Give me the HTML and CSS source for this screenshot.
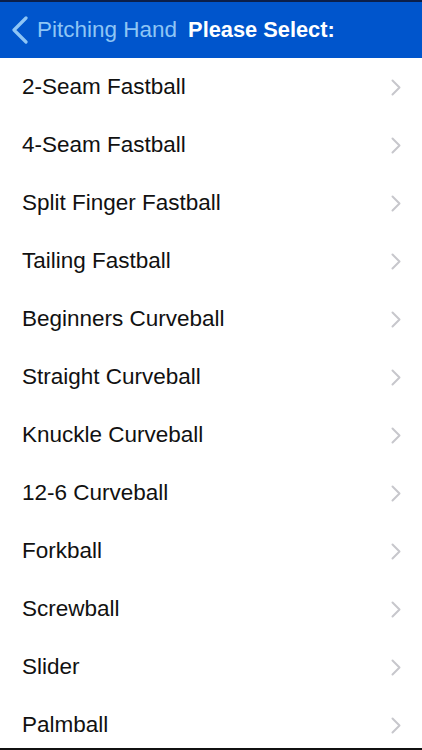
FILE: index.html
```html
<!DOCTYPE html>
<html lang="en">
  <head>
    <meta charset="UTF-8" />
    <meta name="viewport" content="width=device-width, initial-scale=1.0" />
    <title>Please Select</title>
    <link rel="stylesheet" href="styles.css">
  </head>
  <body>
    <header class="navbar">
      <a class="back" href="#">
        <svg class="back-icon" width="18" height="28" viewBox="0 0 18 28">
          <path d="M15 2 L3 14 L15 26" fill="none" stroke="#8ec5f5" stroke-width="3.2" stroke-linecap="round" stroke-linejoin="round" />
        </svg>
        <span>Pitching Hand</span>
      </a>
      <h1 class="title">Please Select:</h1>
    </header>

    <ul class="pitch-list">
      <li>2-Seam Fastball <svg class="chevron" viewBox="0 0 10 17"><path d="M1.5 1.5 L8.5 8.5 L1.5 15.5" /></svg></li>
      <li>4-Seam Fastball <svg class="chevron" viewBox="0 0 10 17"><path d="M1.5 1.5 L8.5 8.5 L1.5 15.5" /></svg></li>
      <li>Split Finger Fastball <svg class="chevron" viewBox="0 0 10 17"><path d="M1.5 1.5 L8.5 8.5 L1.5 15.5" /></svg></li>
      <li>Tailing Fastball <svg class="chevron" viewBox="0 0 10 17"><path d="M1.5 1.5 L8.5 8.5 L1.5 15.5" /></svg></li>
      <li>Beginners Curveball <svg class="chevron" viewBox="0 0 10 17"><path d="M1.5 1.5 L8.5 8.5 L1.5 15.5" /></svg></li>
      <li>Straight Curveball <svg class="chevron" viewBox="0 0 10 17"><path d="M1.5 1.5 L8.5 8.5 L1.5 15.5" /></svg></li>
      <li>Knuckle Curveball <svg class="chevron" viewBox="0 0 10 17"><path d="M1.5 1.5 L8.5 8.5 L1.5 15.5" /></svg></li>
      <li>12-6 Curveball <svg class="chevron" viewBox="0 0 10 17"><path d="M1.5 1.5 L8.5 8.5 L1.5 15.5" /></svg></li>
      <li>Forkball <svg class="chevron" viewBox="0 0 10 17"><path d="M1.5 1.5 L8.5 8.5 L1.5 15.5" /></svg></li>
      <li>Screwball <svg class="chevron" viewBox="0 0 10 17"><path d="M1.5 1.5 L8.5 8.5 L1.5 15.5" /></svg></li>
      <li>Slider <svg class="chevron" viewBox="0 0 10 17"><path d="M1.5 1.5 L8.5 8.5 L1.5 15.5" /></svg></li>
      <li>Palmball <svg class="chevron" viewBox="0 0 10 17"><path d="M1.5 1.5 L8.5 8.5 L1.5 15.5" /></svg></li>
    </ul>
  </body>
</html>
```

FILE: styles.css
```css
body {
  margin: 0;
  font-family: "Liberation Sans", Arial, sans-serif;
  background-color: #fff;
  height: 750px;
  overflow: hidden;
  position: relative;
}
body::after {
  content: "";
  position: absolute;
  left: 0;
  right: 0;
  bottom: 0;
  height: 2px;
  background-color: #111;
}
.navbar {
  display: flex;
  align-items: center;
  height: 56px;
  background-color: #0055cc;
  border-top: 2px solid #0b1f4a;
  padding-left: 11px;
}
.back {
  display: flex;
  align-items: center;
  gap: 8px;
  color: #8ec5f5;
  text-decoration: none;
  font-size: 22.5px;
}
.back-icon {
  display: block;
}
.title {
  margin: 0 0 0 11px;
  color: #fff;
  font-size: 21.8px;
  font-weight: bold;
}
.pitch-list {
  list-style: none;
  margin: 0;
  padding: 0;
}
.pitch-list li {
  display: flex;
  align-items: center;
  justify-content: space-between;
  height: 58px;
  padding: 0 21px 0 22px;
  font-size: 22.5px;
  color: #111;
}
.chevron {
  width: 10px;
  height: 17px;
  fill: none;
  stroke: #c7c7cc;
  stroke-width: 2;
  stroke-linecap: round;
  stroke-linejoin: round;
}
```
